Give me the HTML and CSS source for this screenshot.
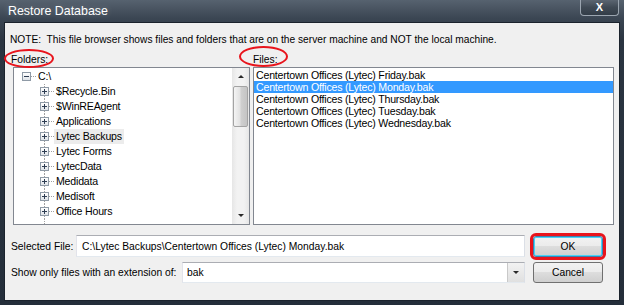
FILE: index.html
```html
<!DOCTYPE html>
<html>
<head>
<meta charset="utf-8">
<title>Restore Database</title>
<link rel="stylesheet" href="styles.css">
</head>
<body>
<div class="window">
  <div class="titlebar">
    <span class="title">Restore Database</span>
    <div class="close">X</div>
  </div>
  <div class="client">
    <p class="note">NOTE:&nbsp; This file browser shows files and folders that are on the server machine and NOT the local machine.</p>
    <div class="panels">
      <div class="panel">
        <div class="label label-folders"><span class="ring ring-folders">Folders:</span></div>
        <div class="box tree">
          <div class="tree-body">
            <div class="row root">
              <span class="exp minus"></span><span class="hline"></span><span class="txt">C:\</span>
            </div>
            <div class="children">
              <div class="row"><span class="gutter"><span class="exp"></span></span><span class="hline"></span><span class="txt">$Recycle.Bin</span></div>
              <div class="row"><span class="gutter"><span class="exp"></span></span><span class="hline"></span><span class="txt">$WinREAgent</span></div>
              <div class="row"><span class="gutter"><span class="exp"></span></span><span class="hline"></span><span class="txt">Applications</span></div>
              <div class="row"><span class="gutter"><span class="exp"></span></span><span class="hline"></span><span class="txt hl">Lytec Backups</span></div>
              <div class="row"><span class="gutter"><span class="exp"></span></span><span class="hline"></span><span class="txt">Lytec Forms</span></div>
              <div class="row"><span class="gutter"><span class="exp"></span></span><span class="hline"></span><span class="txt">LytecData</span></div>
              <div class="row"><span class="gutter"><span class="exp"></span></span><span class="hline"></span><span class="txt">Medidata</span></div>
              <div class="row"><span class="gutter"><span class="exp"></span></span><span class="hline"></span><span class="txt">Medisoft</span></div>
              <div class="row"><span class="gutter"><span class="exp"></span></span><span class="hline"></span><span class="txt">Office Hours</span></div>
              <div class="row"><span class="gutter"></span></div>
            </div>
          </div>
          <div class="vscroll">
            <div class="sb-btn"><span class="tri-up"></span></div>
            <div class="sb-thumb"></div>
            <div class="sb-track"></div>
            <div class="sb-btn"><span class="tri-down"></span></div>
          </div>
        </div>
      </div>
      <div class="panel">
        <div class="label label-files"><span class="ring ring-files">Files:</span></div>
        <div class="box list">
          <div class="item">Centertown Offices (Lytec) Friday.bak</div>
          <div class="item sel">Centertown Offices (Lytec) Monday.bak</div>
          <div class="item">Centertown Offices (Lytec) Thursday.bak</div>
          <div class="item">Centertown Offices (Lytec) Tuesday.bak</div>
          <div class="item last">Centertown Offices (Lytec) Wednesday.bak</div>
        </div>
      </div>
    </div>
    <div class="fields">
      <div class="frow">
        <span class="flabel lbl-sel">Selected File:</span>
        <div class="input">C:\Lytec Backups\Centertown Offices (Lytec) Monday.bak</div>
        <button class="btn ok">OK</button>
      </div>
      <div class="frow">
        <span class="flabel lbl-ext">Show only files with an extension of:</span>
        <div class="combo"><span class="combo-val">bak</span><span class="drop"><span class="tri-down"></span></span></div>
        <button class="btn">Cancel</button>
      </div>
    </div>
  </div>
</div>
</body>
</html>
```
FILE: styles.css
```css
* { box-sizing: border-box; margin: 0; padding: 0; }
html, body { width: 624px; height: 305px; overflow: hidden; }
body {
  background: #27313d;
  font-family: "Liberation Sans", Arial, sans-serif;
  font-size: 10.3px;
  color: #000;
}
.window {
  width: 624px;
  height: 305px;
  display: flex;
  flex-direction: column;
  padding: 0 4px 4px 4px;
  background: linear-gradient(#56626f 0px, #3b4653 18px, #2b3541 40px, #242e3a 100%);
}
.titlebar {
  height: 22px;
  flex: none;
  display: flex;
  align-items: flex-start;
  justify-content: space-between;
}
.title {
  color: #fff;
  font-size: 12.4px;
  line-height: 22px;
  padding-left: 4px;
  text-shadow: 0 0 6px rgba(255,255,255,0.25);
}
.close {
  width: 39px;
  height: 16px;
  margin-right: 1px;
  border: 1px solid #9ba5b0;
  border-top: none;
  border-radius: 0 0 4px 4px;
  background: linear-gradient(#5b6571, #3f4954 50%, #333d48);
  color: #fff;
  font-weight: bold;
  font-size: 11px;
  line-height: 15px;
  text-align: center;
}
.client {
  flex: 1;
  background: #f0f0f0;
  border: 1px solid #1b232d;
  padding: 11px 4px 0 5px;
  display: flex;
  flex-direction: column;
}
.note {
  font-size: 10.2px;
  line-height: 12px;
  white-space: nowrap;
}
.panels {
  display: grid;
  grid-template-columns: 237px 361px;
  column-gap: 3px;
  margin-left: 3px;
  margin-top: 8px;
}
.panel { display: flex; flex-direction: column; }
.label { height: 12px; line-height: 12px; margin-bottom: 1px; }
.label-folders { margin-left: -2px; }
.label-files { margin-left: 0px; }
.ring { position: relative; }
.ring::before {
  content: "";
  position: absolute;
  border: 2px solid #e8141c;
  border-radius: 50%;
}
.ring-folders::before { left: -7px; right: -6px; top: -5px; bottom: -3px; }
.ring-files::before { left: -14px; right: -10px; top: -8px; bottom: -2px; }

.box {
  height: 158px;
  background: #fff;
  border: 1px solid #828790;
}
.tree { display: flex; overflow: hidden; }
.tree-body {
  flex: 1;
  padding: 1px 0 0 8px;
  font-size: 10.6px;
  letter-spacing: -0.2px;
  overflow: hidden;
}
.row { height: 15px; display: flex; align-items: center; white-space: nowrap; }
.children { padding-left: 18px; }
.gutter {
  width: 9px;
  height: 15px;
  flex: none;
  display: flex;
  align-items: center;
  background: repeating-linear-gradient(to bottom, #a0a0a0 0 1px, transparent 1px 2px) center / 1px 100% no-repeat;
}
.exp {
  width: 9px;
  height: 9px;
  flex: none;
  border: 1px solid #8f9aa6;
  background: linear-gradient(#ffffff, #dfe3e8);
  position: relative;
}
.exp::before, .exp::after {
  content: "";
  position: absolute;
  background: #2e3d52;
}
.exp::before { left: 1px; top: 3px; width: 5px; height: 1px; }
.exp::after { left: 3px; top: 1px; width: 1px; height: 5px; }
.exp.minus::after { display: none; }
.hline {
  width: 5px;
  height: 1px;
  flex: none;
  background: repeating-linear-gradient(to right, #a0a0a0 0 1px, transparent 1px 2px);
}
.txt { padding: 0 2px 0 2px; line-height: 15px; }
.txt.hl { background: #ececec; }

.vscroll {
  width: 17px;
  flex: none;
  display: flex;
  flex-direction: column;
  background: linear-gradient(to right, #e6e6e6, #f2f2f2 30%, #f2f2f2 70%, #e6e6e6);
}
.sb-btn { height: 17px; display: flex; align-items: center; justify-content: center; flex: none; }
.tri-up, .tri-down { width: 0; height: 0; border-left: 3px solid transparent; border-right: 3px solid transparent; }
.tri-up { border-bottom: 3px solid #2a2a2a; }
.tri-down { border-top: 3px solid #2a2a2a; }
.sb-thumb {
  height: 41px;
  margin: 1px 1px 0 1px;
  border: 1px solid #a3a3a3;
  border-radius: 2px;
  background: linear-gradient(to right, #f4f4f4, #e2e2e2 45%, #cfcfcf 55%, #c4c4c4);
  flex: none;
}
.sb-track { flex: 1; }

.list {
  padding-top: 1px;
  font-size: 10.6px;
  letter-spacing: -0.2px;
  overflow: hidden;
}
.item { height: 12px; line-height: 12px; padding-left: 2px; white-space: nowrap; }
.item.sel { background: #3399ff; color: #fff; }

.fields {
  margin-top: 10px;
  margin-right: 12px;
  display: flex;
  flex-direction: column;
  gap: 5px;
}
.frow { display: flex; align-items: center; }
.flabel { margin-left: 1px; white-space: nowrap; flex: none; }
.lbl-sel { width: 65px; }
.lbl-ext { width: 171px; }
.input, .combo {
  flex: 1;
  background: #fff;
  border: 1px solid;
  border-color: #abadb3 #dbdfe6 #e3e9ef #e2e3ea;
  display: flex;
  align-items: center;
}
.input { height: 22px; padding-left: 5px; }
.combo { height: 21px; padding-left: 4px; }
.combo-val { flex: 1; }
.drop {
  width: 17px;
  height: 19px;
  border-left: 1px solid #c9c9c9;
  background: linear-gradient(#f2f2f2, #e0e0e0);
  display: flex;
  align-items: center;
  justify-content: center;
}
.btn {
  width: 70px;
  height: 21px;
  margin-left: 8px;
  flex: none;
  font: inherit;
  color: #000;
  border: 1px solid #707070;
  border-radius: 3px;
  background: linear-gradient(#f2f2f2 0%, #ebebeb 49%, #dddddd 50%, #cfcfcf 100%);
}
.btn.ok {
  border-color: #3c7fb1;
  box-shadow: inset 0 0 0 1px #48d4f7;
  outline: 3px solid #e8141c;
  outline-offset: 0;
}
```
